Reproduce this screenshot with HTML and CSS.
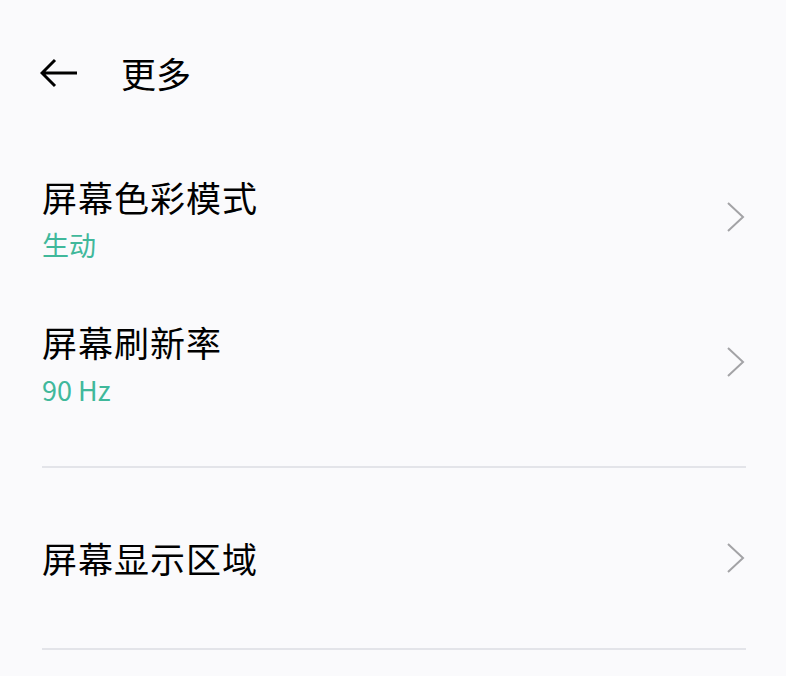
FILE: index.html
```html
<!DOCTYPE html>
<html lang="zh-CN">
<head>
<meta charset="utf-8">
<title>更多</title>
<link rel="stylesheet" href="styles.css">
</head>
<body>
<div class="page">
  <header class="header">
    <svg class="back" width="38" height="30" viewBox="0 0 38 30">
      <path d="M37 15 H3 M15 2 L2 15 L15 28" fill="none" stroke="#000" stroke-width="3" stroke-linecap="butt" stroke-linejoin="miter"/>
    </svg>
    <h1 class="title">更多</h1>
  </header>

  <div class="item">
    <div class="text">
      <div class="label">屏幕色彩模式</div>
      <div class="value">生动</div>
    </div>
    <svg class="chev" width="20" height="32" viewBox="0 0 20 32"><polyline points="2,2 17,16 2,30" fill="none" stroke="#a3a3a6" stroke-width="2"/></svg>
  </div>

  <div class="item">
    <div class="text">
      <div class="label">屏幕刷新率</div>
      <div class="value">90 Hz</div>
    </div>
    <svg class="chev" width="20" height="32" viewBox="0 0 20 32"><polyline points="2,2 17,16 2,30" fill="none" stroke="#a3a3a6" stroke-width="2"/></svg>
  </div>

  <div class="divider first"></div>

  <div class="item single">
    <div class="text">
      <div class="label">屏幕显示区域</div>
    </div>
    <svg class="chev" width="20" height="32" viewBox="0 0 20 32"><polyline points="2,2 17,16 2,30" fill="none" stroke="#a3a3a6" stroke-width="2"/></svg>
  </div>

  <div class="divider"></div>
</div>
</body>
</html>
```
FILE: styles.css
```css
html, body {
  margin: 0;
  padding: 0;
  background: #fafafc;
}
body {
  font-family: "Noto Sans CJK SC", "Noto Sans", sans-serif;
  color: #000;
  width: 786px;
  height: 676px;
  overflow: hidden;
}
.header {
  height: 146px;
  display: flex;
  align-items: center;
  padding-left: 40px;
}
.back {
  display: block;
}
.title {
  margin: 0 0 0 43px;
  font-size: 35px;
  font-weight: 400;
  line-height: 40px;
}
.item {
  display: flex;
  align-items: center;
  justify-content: space-between;
  height: 145px;
  box-sizing: border-box;
  padding: 31px 40px 29px 42px;
}
.text {
  display: flex;
  flex-direction: column;
}
.label {
  font-size: 35px;
  line-height: 40px;
  letter-spacing: 1px;
}
.value {
  margin-top: 11px;
  font-size: 27px;
  line-height: 34px;
  color: #40b89b;
}
.chev {
  display: block;
  margin-top: -6px;
}
.item.single {
  height: 180px;
  padding-top: 0;
  padding-bottom: 0;
}
.item.single .chev {
  margin-top: 0;
}
.divider {
  height: 2px;
  background: #e3e4e9;
  margin: 0 40px 0 42px;
}
.divider.first {
  margin-top: 30px;
}
```
